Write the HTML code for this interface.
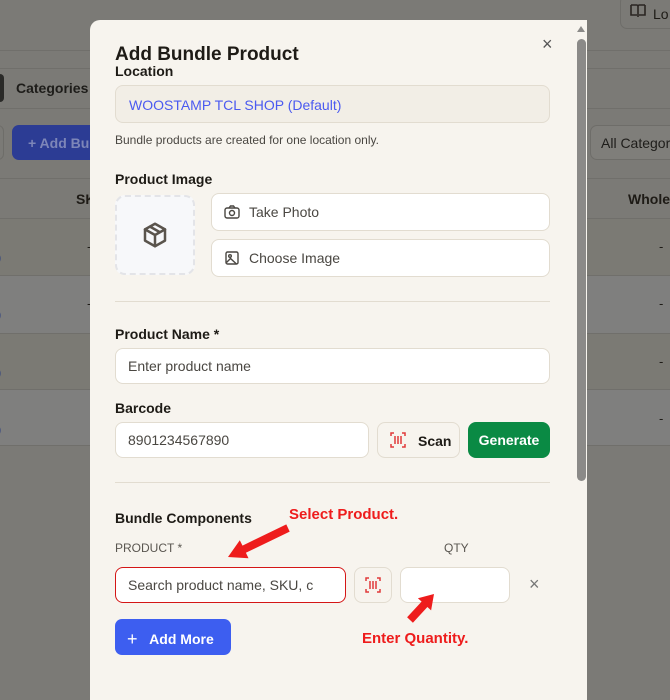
<!DOCTYPE html>
<html><head><meta charset="utf-8"><style>
*{box-sizing:border-box;margin:0;padding:0}
body{width:670px;height:676px;overflow:hidden;background:#7b7a76;font-family:"Liberation Sans",sans-serif;position:relative;color:#1e1b16}
.abs{position:absolute}
.lbl{font-size:14px;font-weight:bold;color:#1e1b16}
.inp{position:absolute;background:#fff;border:1px solid #e2dcd0;border-radius:8px;font-size:14px;color:#4a4742;display:flex;align-items:center;padding-left:12px}
</style></head><body>
<div class="abs" style="left:0;top:50px;width:670px;height:1px;background:#706f6b"></div>
<div class="abs" style="left:0;top:68px;width:670px;height:1px;background:#706f6b"></div>
<div class="abs" style="left:0;top:108px;width:670px;height:1px;background:#706f6b"></div>
<div class="abs" style="left:-6px;top:74px;width:10px;height:28px;background:#2a2a28;border-radius:4px"></div>
<div class="abs" style="left:16px;top:80px;font-size:14px;font-weight:bold;color:#1e1d1a">Categories</div>
<div class="abs" style="left:-10px;top:125px;width:14px;height:35px;border:1px solid #6e6d69;border-radius:6px"></div>
<div class="abs" style="left:12px;top:125px;width:90px;height:35px;background:#2c3c94;border-radius:7px;color:#7d86b8;font-size:14px;font-weight:bold;padding:10px 0 0 16px">+ Add Bu</div>
<div class="abs" style="left:590px;top:125px;width:90px;height:35px;background:#7f7e7a;border:1px solid #6e6d69;border-radius:7px;font-size:14px;padding:9px 0 0 10px;color:#1e1d1a">All Categor</div>
<div class="abs" style="left:620px;top:-5px;width:60px;height:34px;border:1px solid #6e6d69;border-radius:7px;font-size:14px;padding:10px 0 0 32px">Lo</div>
<svg class="abs" style="left:630px;top:4px" width="16" height="14" viewBox="0 0 16 14" fill="none" stroke="#2a2522" stroke-width="1.6"><path d="M1 1h5.5c.8 0 1.5.7 1.5 1.5V13M15 1H9.5C8.7 1 8 1.7 8 2.5M1 1v10h6M15 1v10H9"/></svg>
<div class="abs" style="left:0;top:178px;width:670px;height:1px;background:#706f6b"></div>
<div class="abs" style="left:76px;top:191px;font-size:14px;font-weight:bold">SK</div>
<div class="abs" style="left:628px;top:191px;font-size:14px;font-weight:bold">Whole</div>
<div class="abs" style="left:0;top:218px;width:670px;height:57px;background:#7b7a74;border-top:1px solid #706f6b"></div>
<div class="abs" style="left:0;top:275px;width:670px;height:58px;background:#7f7f7e;border-top:1px solid #706f6b"></div>
<div class="abs" style="left:0;top:333px;width:670px;height:56px;background:#7b7a74;border-top:1px solid #706f6b"></div>
<div class="abs" style="left:0;top:389px;width:670px;height:57px;background:#7f7f7e;border-top:1px solid #706f6b;border-bottom:1px solid #706f6b"></div>
<div class="abs" style="left:-3px;top:250px;font-size:13px;color:#2a3e80">)</div>
<div class="abs" style="left:-3px;top:307px;font-size:13px;color:#2a3e80">)</div>
<div class="abs" style="left:-3px;top:365px;font-size:13px;color:#2a3e80">)</div>
<div class="abs" style="left:-3px;top:422px;font-size:13px;color:#2a3e80">)</div>
<div class="abs" style="left:87px;top:239px;font-size:13px">-</div>
<div class="abs" style="left:87px;top:296px;font-size:13px">-</div>
<div class="abs" style="left:659px;top:239px;font-size:13px">-</div>
<div class="abs" style="left:659px;top:296px;font-size:13px">-</div>
<div class="abs" style="left:659px;top:354px;font-size:13px">-</div>
<div class="abs" style="left:659px;top:411px;font-size:13px">-</div>

<div class="abs" style="left:90px;top:20px;width:497px;height:680px;background:#f7f4ee;border-radius:10px 0 0 0"></div>
<div class="abs" style="left:575px;top:22px;width:12px;height:660px;background:#f7f4ee"></div>
<div class="abs" style="left:577px;top:39px;width:9px;height:442px;background:#8b8a88;border-radius:5px"></div>
<div class="abs" style="left:577px;top:26px;width:0;height:0;border-left:4.5px solid transparent;border-right:4.5px solid transparent;border-bottom:6px solid #8b8a88"></div>

<div class="abs" style="left:115px;top:44px;font-size:19px;font-weight:bold;color:#1e1b16">Add Bundle Product</div>
<div class="abs" style="left:542px;top:34px;font-size:18px;color:#555">×</div>
<div class="abs lbl" style="left:115px;top:63px">Location</div>
<div class="abs" style="left:115px;top:85px;width:435px;height:38px;background:#f2eee6;border:1px solid #e2dcd0;border-radius:8px;font-size:14px;color:#4b5af0;padding:11px 0 0 13px">WOOSTAMP TCL SHOP (Default)</div>
<div class="abs" style="left:115px;top:133px;font-size:12px;color:#4a4742">Bundle products are created for one location only.</div>

<div class="abs lbl" style="left:115px;top:171px">Product Image</div>
<div class="abs" style="left:115px;top:195px;width:80px;height:80px;background:#f7f8fa;border:2px dashed #e3e4e8;border-radius:10px"></div>
<svg class="abs" style="left:140px;top:220px" width="30" height="30" viewBox="0 0 24 24" fill="none" stroke="#5a544c" stroke-width="2" stroke-linejoin="round" stroke-linecap="round"><path d="M12 3l8 4.5v9L12 21l-8-4.5v-9z"/><path d="M4 7.5l8 4.5 8-4.5M12 12v9M8 5.3l8 4.5"/></svg>
<div class="inp" style="left:211px;top:193px;width:339px;height:38px;padding-left:37px">Take Photo</div>
<svg class="abs" style="left:224px;top:205px" width="16" height="14" viewBox="0 0 16 14" fill="none" stroke="#4a4742" stroke-width="1.4"><rect x="1" y="3" width="14" height="10" rx="2"/><path d="M5 3l1.5-2h3L11 3"/><circle cx="8" cy="8" r="2.5"/></svg>
<div class="inp" style="left:211px;top:239px;width:339px;height:38px;padding-left:37px">Choose Image</div>
<svg class="abs" style="left:225px;top:251px" width="14" height="14" viewBox="0 0 14 14" fill="none" stroke="#4a4742" stroke-width="1.4"><rect x="1" y="1" width="12" height="12" rx="1.5"/><circle cx="5" cy="5" r="1.3"/><path d="M1.5 11.5l4-4 6 5.5"/></svg>
<div class="abs" style="left:115px;top:301px;width:435px;height:1px;background:#e2dcd0"></div>

<div class="abs lbl" style="left:115px;top:326px">Product Name *</div>
<div class="inp" style="left:115px;top:348px;width:435px;height:36px">Enter product name</div>
<div class="abs lbl" style="left:115px;top:400px">Barcode</div>
<div class="inp" style="left:115px;top:422px;width:254px;height:36px">8901234567890</div>
<div class="abs" style="left:377px;top:422px;width:83px;height:36px;background:#f7f4ee;border:1px solid #e2dcd0;border-radius:8px;font-size:14px;font-weight:bold;padding:10px 0 0 40px">Scan</div>
<svg class="abs" style="left:390px;top:432px" width="16" height="16" viewBox="0 0 16 16" fill="none" stroke="#e03a3a" stroke-width="1.5"><path d="M1 4V1h3M12 1h3v3M15 12v3h-3M4 15H1v-3M5 4v8M8 4v8M11 4v8"/></svg>
<div class="abs" style="left:468px;top:422px;width:82px;height:36px;background:#0a8a44;border-radius:8px;color:#fff;font-size:14px;font-weight:bold;text-align:center;padding-top:10px">Generate</div>
<div class="abs" style="left:115px;top:482px;width:435px;height:1px;background:#e2dcd0"></div>

<div class="abs lbl" style="left:115px;top:510px">Bundle Components</div>
<div class="abs" style="left:115px;top:541px;font-size:12px;color:#5a5650">PRODUCT *</div>
<div class="abs" style="left:444px;top:541px;font-size:12px;color:#5a5650">QTY</div>
<div class="inp" style="left:115px;top:567px;width:231px;height:36px;border-color:#d41616">Search product name, SKU, c</div>
<div class="abs" style="left:354px;top:567px;width:38px;height:36px;background:#f7f4ee;border:1px solid #e2dcd0;border-radius:8px"></div>
<svg class="abs" style="left:365px;top:577px" width="16" height="16" viewBox="0 0 16 16" fill="none" stroke="#e03a3a" stroke-width="1.5"><path d="M1 4V1h3M12 1h3v3M15 12v3h-3M4 15H1v-3M5 4v8M8 4v8M11 4v8"/></svg>
<div class="inp" style="left:400px;top:567px;width:110px;height:36px"></div>
<div class="abs" style="left:529px;top:574px;font-size:18px;color:#777">×</div>
<div class="abs" style="left:115px;top:619px;width:116px;height:36px;background:#3d5ef0;border-radius:7px;color:#fff;font-size:14px;font-weight:bold;padding:9px 0 0 12px"><span style="font-size:18px;font-weight:normal;position:relative;top:1px">+</span>&nbsp;&nbsp;&nbsp;Add More</div>

<div class="abs" style="left:289px;top:506px;font-size:15px;font-weight:bold;color:#ee1c1c">Select Product.</div>
<div class="abs" style="left:362px;top:630px;font-size:15px;font-weight:bold;color:#ee1c1c">Enter Quantity.</div>
<svg class="abs" style="left:0;top:0" width="670" height="676"><polygon fill="#ee1c1c" points="228,557 248.5,558.2 245.9,552.8 289.7,531.6 286.3,524.4 242.5,545.6 239.8,540.2"/><polygon fill="#ee1c1c" points="434,594 431.1,610.4 427.4,607 412.9,622.7 407.1,617.3 421.6,601.6 417.9,598.2"/></svg>
</body></html>
